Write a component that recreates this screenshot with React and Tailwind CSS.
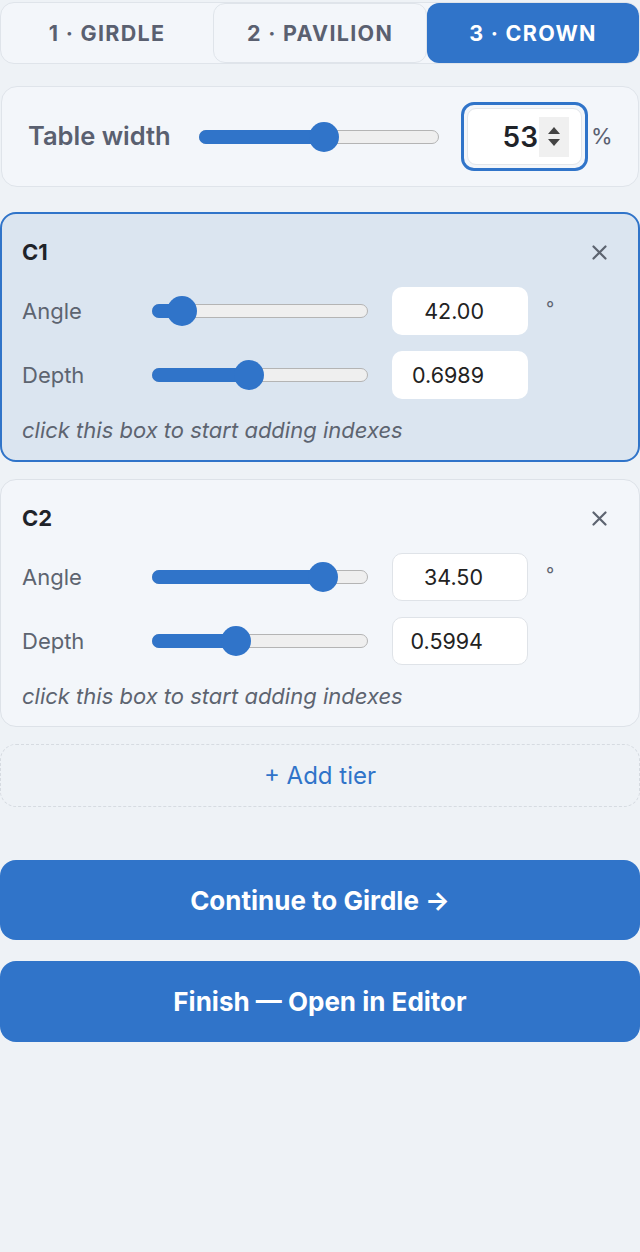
import React from 'react';

const font = { fontFamily: 'Inter, "Noto Sans", sans-serif' };

const Slider = ({ pct, className = '' }) => (
  <div className={`relative h-[14px] ${className}`}>
    <div className="absolute inset-0 rounded-full bg-[#efefef] border border-[#b4b4b4]" />
    <div
      className="absolute left-0 top-0 bottom-0 rounded-full bg-[#3074c9]"
      style={{ width: `${pct}%` }}
    />
    <div
      className="absolute top-1/2 h-[30px] w-[30px] -translate-x-1/2 -translate-y-1/2 rounded-full bg-[#3074c9]"
      style={{ left: `${pct}%` }}
    />
  </div>
);

const ValueBox = ({ value, bordered }) => (
  <div
    className={`w-[136px] h-[48px] rounded-[10px] bg-white flex items-center justify-end pr-[44px] text-[21.5px] text-[#222] ${
      bordered ? 'border border-[#dfe3e8]' : ''
    }`}
  >
    {value}
  </div>
);

const Row = ({ label, pct, value, unit, bordered }) => (
  <div className="flex items-center h-[48px]">
    <div className="w-[130px] text-[22px] text-[#5d6470]">{label}</div>
    <Slider pct={pct} className="w-[216px]" />
    <div className="ml-[24px]">
      <ValueBox value={value} bordered={bordered} />
    </div>
    {unit && <div className="ml-[18px] -mt-[6px] text-[18px] text-[#5d6470]">{unit}</div>}
  </div>
);

const Tier = ({ name, active, angle, depth }) => (
  <div
    className={`rounded-[16px] pt-[22px] pb-[13px] ${
      active
        ? 'px-[20px] bg-[#dbe5f0] border-2 border-[#3074c9]'
        : 'px-[21px] bg-[#f3f6fa] border border-[#dde2e8]'
    }`}
  >
    <div className="flex items-center justify-between h-[32px]">
      <div className="text-[22px] font-bold text-[#1f2329]">{name}</div>
      <div className="mr-[11px] text-[#5d6470]">
        <svg width="15" height="15" viewBox="0 0 15 15">
          <path d="M1.5 1.5 L13.5 13.5 M13.5 1.5 L1.5 13.5" stroke="currentColor" strokeWidth="2.2" strokeLinecap="round" />
        </svg>
      </div>
    </div>
    <div className="mt-[19px] flex flex-col gap-[16px]">
      <Row label="Angle" pct={angle.pct} value={angle.value} unit="°" bordered={!active} />
      <Row label="Depth" pct={depth.pct} value={depth.value} bordered={!active} />
    </div>
    <div className="mt-[15px] text-[22px] italic text-[#5d6470]">click this box to start adding indexes</div>
  </div>
);

export default function App() {
  return (
    <div className="min-h-[1252px] bg-[#eef2f6] pt-[2px]" style={font}>
      {/* step tabs */}
      <div className="flex h-[62px] rounded-[14px] border border-[#dfe4ea] bg-[#f3f6fa] overflow-hidden">
        <div className="flex-1 flex items-center justify-center pt-[1px] text-[21.5px] font-bold tracking-[0.06em] text-[#5a6070]">
          1 · GIRDLE
        </div>
        <div className="flex-1 flex items-center justify-center pt-[1px] rounded-[12px] border border-[#dfe4ea] text-[21.5px] font-bold tracking-[0.06em] text-[#5a6070]">
          2 · PAVILION
        </div>
        <div className="flex-1 flex items-center justify-center pt-[1px] rounded-[12px] bg-[#3074c9] text-[21.5px] font-bold tracking-[0.06em] text-white">
          3 · CROWN
        </div>
      </div>

      {/* table width */}
      <div className="mt-[22px] mx-[1px] h-[101px] rounded-[16px] border border-[#dfe4ea] bg-[#f3f6fa] flex items-center pl-[26px]">
        <div className="w-[171px] text-[25.5px] font-semibold text-[#5a6070]">Table width</div>
        <Slider pct={52} className="w-[240px]" />
        <div className="ml-[22px] w-[127px] h-[69px] rounded-[13px] border-[3px] border-[#3074c9] p-[3px]">
          <div className="h-full rounded-[9px] border border-[#e3e6ea] bg-white flex items-center justify-end pr-[12px]">
            <span className="text-[28px] font-semibold text-[#1f2329]">53</span>
            <div className="ml-[1px] w-[30px] h-[40px] bg-[#f0f0f0] flex flex-col items-center justify-center gap-[5px]">
              <svg width="12" height="7" viewBox="0 0 12 7"><path d="M6 0 L12 7 L0 7Z" fill="#444" /></svg>
              <svg width="12" height="7" viewBox="0 0 12 7"><path d="M0 0 L12 0 L6 7Z" fill="#444" /></svg>
            </div>
          </div>
        </div>
        <div className="ml-[3px] text-[22px] text-[#5a6070]">%</div>
      </div>

      <div className="mt-[25px] flex flex-col gap-[17px]">
        <Tier
          name="C1"
          active
          angle={{ pct: 14, value: '42.00' }}
          depth={{ pct: 45, value: '0.6989' }}
        />
        <Tier
          name="C2"
          angle={{ pct: 79, value: '34.50' }}
          depth={{ pct: 39, value: '0.5994' }}
        />
        <div className="h-[63px] rounded-[16px] border border-dashed border-[#d6dbe1] flex items-center justify-center text-[24px] text-[#3074c9]">
          + Add tier
        </div>
      </div>

      <div className="mt-[53px] flex flex-col gap-[21px]">
        <button className="h-[80px] rounded-[16px] bg-[#3074c9] text-white text-[26px] font-bold">
          Continue to Girdle →
        </button>
        <button className="h-[81px] rounded-[16px] bg-[#3074c9] text-white text-[26px] font-bold">
          Finish — Open in Editor
        </button>
      </div>
    </div>
  );
}
